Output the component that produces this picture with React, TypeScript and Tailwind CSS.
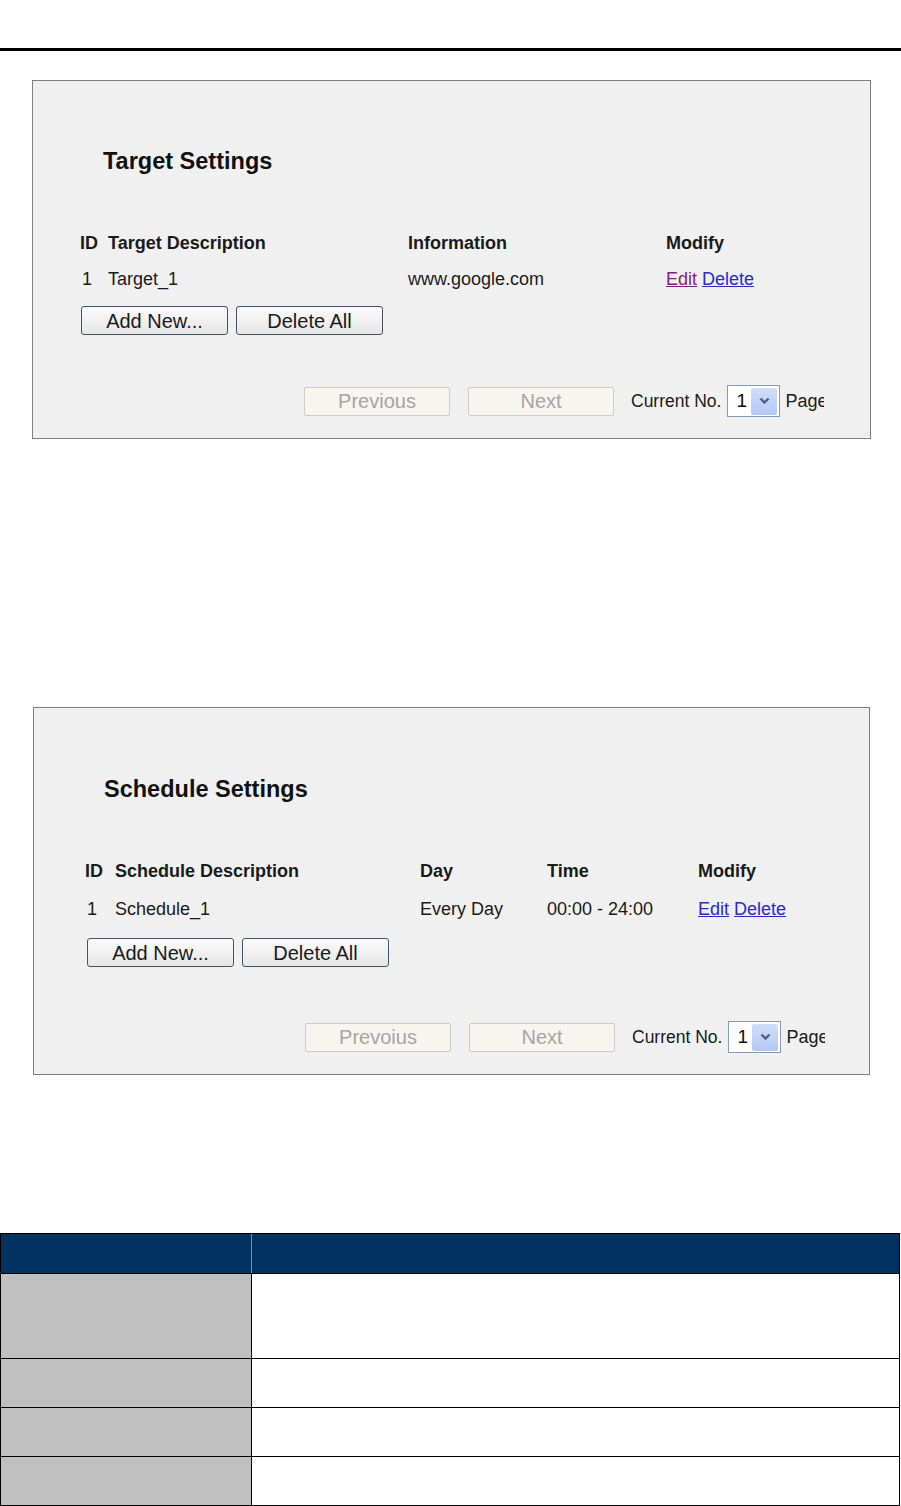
import React from "react";

const font = { fontFamily: '"Liberation Sans", Arial, sans-serif' };

function Btn({ label, disabled, className = "" }: { label: string; disabled?: boolean; className?: string }) {
  if (disabled) {
    return (
      <div
        className={`flex h-[29px] w-[146px] items-center justify-center rounded-[2px] border border-[#cfcdc2] bg-[#f6f5ef] text-[20px] text-[#a5a5a5] ${className}`}
      >
        {label}
      </div>
    );
  }
  return (
    <div
      className={`flex h-[29px] w-[147px] items-center justify-center rounded-[3px] border border-[#44546a] bg-gradient-to-b from-[#fbfbfb] to-[#e6e6e6] text-[20px] text-[#1a1a1a] ${className}`}
    >
      {label}
    </div>
  );
}

function Select() {
  return (
    <div className="flex h-[32px] w-[53px] items-center border border-[#7f9db9] bg-white pl-[8px] pr-[2px]">
      <span className="flex-1 text-[19px] text-[#111]">1</span>
      <div className="flex h-[27px] w-[26px] items-center justify-center rounded-[2px] bg-gradient-to-b from-[#d0ddfb] to-[#b4c8f5]">
        <svg width="11" height="8" viewBox="0 0 11 8">
          <path d="M1.5 1.5 L5.5 5.5 L9.5 1.5" stroke="#4d6185" strokeWidth="2.4" fill="none" />
        </svg>
      </div>
    </div>
  );
}

function Pager({ prev }: { prev: string }) {
  return (
    <div className="flex items-center pl-[271px]">
      <Btn label={prev} disabled />
      <Btn label="Next" disabled className="ml-[18px]" />
      <span className="ml-[17px] text-[17.5px] text-[#1a1a1a]">Current No.</span>
      <div className="ml-[6px]">
        <Select />
      </div>
      <span className="ml-[5px] w-[39px] overflow-hidden whitespace-nowrap text-[18px] text-[#1a1a1a]">Page</span>
    </div>
  );
}

function TargetPanel() {
  return (
    <div className="ml-[32px] mt-[29px] h-[359px] w-[839px] border border-[#7f7f7f] bg-[#f0f0f0] pl-[47px] pt-[66px]" style={font}>
      <div className="h-[28px] pl-[23px] text-[23.5px] font-bold leading-[28px] text-[#111]">Target Settings</div>
      <div className="mt-[50px] flex h-[36px] items-center text-[18px] font-bold text-[#1a1a1a]">
        <span className="w-[28px]">ID</span>
        <span className="w-[300px]">Target Description</span>
        <span className="w-[258px]">Information</span>
        <span>Modify</span>
      </div>
      <div className="flex h-[36px] items-center text-[18px] text-[#1a1a1a]">
        <span className="w-[28px] pl-[2px]">1</span>
        <span className="w-[300px]">Target_1</span>
        <span className="w-[258px]">www.google.com</span>
        <span className="flex gap-[5px]">
          <span className="text-[#8a1a8a] underline">Edit</span>
          <span className="text-[#2a2ad0] underline">Delete</span>
        </span>
      </div>
      <div className="mt-[9px] flex gap-[8px] pl-[1px]">
        <Btn label="Add New..." />
        <Btn label="Delete All" />
      </div>
      <div className="mt-[50px] -ml-[47px]">
        <Pager prev="Previous" />
      </div>
    </div>
  );
}

function SchedulePanel() {
  return (
    <div className="ml-[33px] mt-[268px] h-[368px] w-[837px] border border-[#7f7f7f] bg-[#f0f0f0] pl-[51px] pt-[67px]" style={font}>
      <div className="h-[28px] pl-[19px] text-[23.5px] font-bold leading-[28px] text-[#111]">Schedule Settings</div>
      <div className="mt-[49px] flex h-[38px] items-center text-[18px] font-bold text-[#1a1a1a]">
        <span className="w-[30px]">ID</span>
        <span className="w-[305px]">Schedule Description</span>
        <span className="w-[127px]">Day</span>
        <span className="w-[151px]">Time</span>
        <span>Modify</span>
      </div>
      <div className="flex h-[38px] items-center text-[18px] text-[#1a1a1a]">
        <span className="w-[30px] pl-[2px]">1</span>
        <span className="w-[305px]">Schedule_1</span>
        <span className="w-[127px]">Every Day</span>
        <span className="w-[151px]">00:00 - 24:00</span>
        <span className="flex gap-[5px]">
          <span className="text-[#2a2ad0] underline">Edit</span>
          <span className="text-[#2a2ad0] underline">Delete</span>
        </span>
      </div>
      <div className="mt-[10px] flex gap-[8px] pl-[2px]">
        <Btn label="Add New..." />
        <Btn label="Delete All" />
      </div>
      <div className="mt-[54px] -ml-[51px]">
        <Pager prev="Prevoius" />
      </div>
    </div>
  );
}

function InfoTable() {
  const rows = [85, 49, 49, 48];
  return (
    <div className="mt-[158px] w-[900px] border border-black">
      <div className="flex h-[40px] border-b border-black bg-[#003362]">
        <div className="w-[251px] border-r border-[#6f8fb0]" />
        <div className="flex-1" />
      </div>
      {rows.map((h, i) => (
        <div key={i} className={`flex ${i < rows.length - 1 ? "border-b border-black" : ""}`} style={{ height: h }}>
          <div className="w-[251px] border-r border-black bg-[#c0c0c0]" />
          <div className="flex-1 bg-white" />
        </div>
      ))}
    </div>
  );
}

export default function App() {
  return (
    <div className="w-[901px] bg-white" style={font}>
      <div className="h-[48px]" />
      <div className="h-[3px] bg-black" />
      <TargetPanel />
      <SchedulePanel />
      <InfoTable />
    </div>
  );
}
